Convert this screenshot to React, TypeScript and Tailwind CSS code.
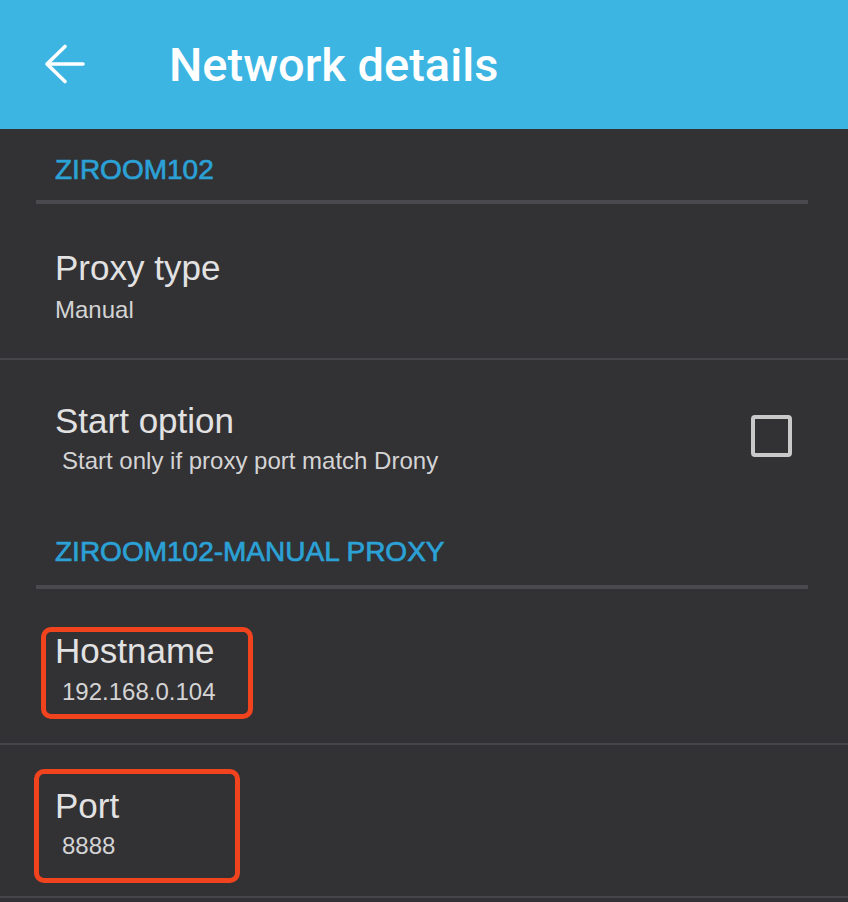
import React from "react";

const sans = { fontFamily: '"Liberation Sans", Arial, sans-serif' };

function CategoryHeader({ label, pt }: { label: string; pt: string }) {
  return (
    <div className={pt}>
      <div className="pl-[55px] text-[28px] leading-none text-[#2ba1d6] [-webkit-text-stroke:0.7px_#2ba1d6] h-[28px] whitespace-nowrap">{label}</div>
    </div>
  );
}

function Divider({ inset, className }: { inset?: boolean; className?: string }) {
  return inset ? (
    <div className={"ml-[36px] mr-[40px] h-[4px] bg-[#4a494d] " + (className ?? "")} />
  ) : (
    <div className={"h-[2px] bg-[#46454a] " + (className ?? "")} />
  );
}

export default function App() {
  return (
    <div className="w-[848px] min-h-[902px] bg-[#323134] overflow-hidden" style={sans}>
      <div className="h-[129px] bg-[#3db5e3] flex items-center">
        <svg width="44" height="44" viewBox="0 0 44 44" className="ml-[42px]">
          <path d="M41 21H5.5M23 3.5L5 21L23 38.5" fill="none" stroke="#ffffff" strokeWidth="3.6" strokeLinecap="round" strokeLinejoin="round" />
        </svg>
        <div className="ml-[83px] text-[47px] leading-none font-medium text-white" style={{ fontFamily: 'Roboto, "Liberation Sans", sans-serif' }}>
          Network details
        </div>
      </div>

      <CategoryHeader label="ZIROOM102" pt="pt-[27px]" />
      <Divider inset className="mt-[16px]" />

      <div className="pt-[46px] pb-[36px] pl-[55px]">
        <div className="text-[35px] leading-none h-[35px] text-[#e2e2e2]">Proxy type</div>
        <div className="mt-[13px] text-[24px] leading-none h-[24px] text-[#d4d4d4]">Manual</div>
      </div>
      <Divider />

      <div className="pt-[43px] flex items-center">
        <div className="flex-1 pl-[55px]">
          <div className="text-[35px] leading-none h-[35px] text-[#e2e2e2]">Start option</div>
          <div className="mt-[11px] pl-[7px] text-[24px] leading-none h-[24px] text-[#d4d4d4] whitespace-nowrap">Start only if proxy port match Drony</div>
        </div>
        <div className="mr-[56px] mt-[-4px] w-[41px] h-[42px] rounded-[4px] border-[4px] border-[#c9c9c9]" />
      </div>

      <CategoryHeader label="ZIROOM102-MANUAL PROXY" pt="pt-[65px]" />
      <Divider inset className="mt-[19px]" />

      <div className="relative pt-[44px] pb-[39px] pl-[55px]">
        <div className="text-[35px] leading-none h-[35px] text-[#e2e2e2]">Hostname</div>
        <div className="mt-[12px] pl-[7px] text-[24px] leading-none h-[24px] text-[#d4d4d4]">192.168.0.104</div>
        <div className="absolute left-[41px] top-[38px] w-[212px] h-[92px] rounded-[10px] border-[5px] border-[#f2431f]" />
      </div>
      <Divider />

      <div className="relative pt-[43px] pb-[38px] pl-[55px]">
        <div className="text-[35px] leading-none h-[35px] text-[#e2e2e2]">Port</div>
        <div className="mt-[11px] pl-[7px] text-[24px] leading-none h-[24px] text-[#d4d4d4]">8888</div>
        <div className="absolute left-[34px] top-[24px] w-[206px] h-[114px] rounded-[10px] border-[5px] border-[#f2431f]" />
      </div>
      <Divider />
    </div>
  );
}
